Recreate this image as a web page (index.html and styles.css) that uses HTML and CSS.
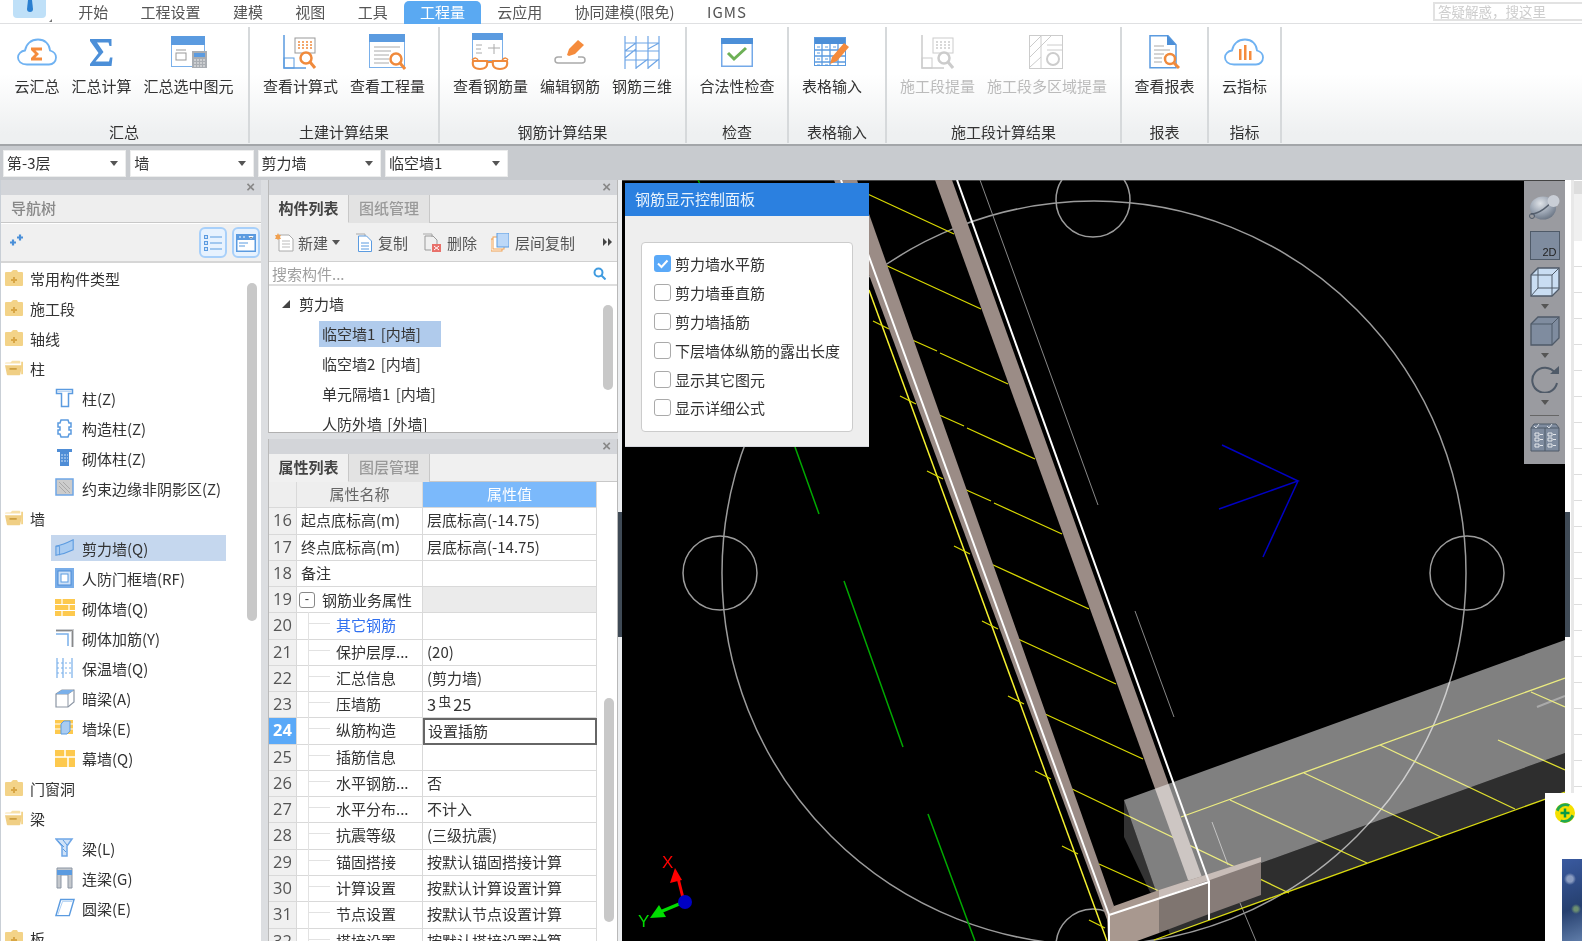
FILE: index.html
```html
<!DOCTYPE html>
<html lang="zh-CN">
<head>
<meta charset="utf-8">
<title>工程量</title>
<link rel="stylesheet" href="styles.css">
</head>
<body>
<svg class="defs" width="0" height="0">
  <defs><radialGradient id="orb" cx=".4" cy=".3" r=".8"><stop offset="0" stop-color="#dfe3e8"/><stop offset=".55" stop-color="#98a2b0"/><stop offset="1" stop-color="#5f6a79"/></radialGradient></defs>
  <symbol id="fc" viewBox="0 0 18 16"><path d="M0 3a1 1 0 0 1 1-1h5l2-2h4l1 2h4a1 1 0 0 1 1 1v12a1 1 0 0 1-1 1H1a1 1 0 0 1-1-1z" fill="#f3d388"/><path d="M6 9h6v2H6z" fill="#d8a645"/><path d="M8 7h2v6H8z" fill="#d8a645"/></symbol>
  <symbol id="fo" viewBox="0 0 20 16"><path d="M0 3a1 1 0 0 1 1-1h5l2-2h8a1 1 0 0 1 1 1v2H6z" fill="#f7e0a8"/><path d="M0 5h19l-2 10a1 1 0 0 1-1 1H3a1 1 0 0 1-1-1z" fill="#f0cf85"/><path d="M5 8h8v2H5z" fill="#cfa040"/><path d="M18 1h2v14h-2z" fill="#f3d388"/></symbol>
  <symbol id="tri" viewBox="0 0 8 5"><path d="M0 0h8L4 5z" fill="#555"/></symbol>
</svg>
<div class="app">
  <header class="menu">
    <div class="logo">
      <svg width="62" height="24" viewBox="0 0 62 24"><path d="M13 0h33v14a4 4 0 0 1-4 4H17a4 4 0 0 1-4-4z" fill="#bfe0f8"/><path d="M28 0h4l1 9a3 3 0 0 1-6 0z" fill="#2a7fd0"/><path d="M49 22l3-3v3z" fill="#777"/></svg>
    </div>
    <span class="tab">开始</span><span class="tab">工程设置</span><span class="tab">建模</span><span class="tab">视图</span><span class="tab">工具</span><span class="tab active">工程量</span><span class="tab">云应用</span><span class="tab">协同建模(限免)</span><span class="tab latin">IGMS</span>
    <div class="ask">答疑解惑，搜这里</div>
  </header>

  <section class="ribbon">
    <div class="group g1">
      <div class="items">
        <div class="item"><div class="ico"><svg width="40" height="28" viewBox="0 0 40 28"><path d="M10 26.500C4 26.500 1 23 1 19.500 1 16 4 13 8 12.500 9 6 14 1.500 21 1.500 28 1.500 32.500 6 33 12.500 36.500 13.500 39 16 39 19.500 39 23.500 36 26.500 32 26.500Z" fill="#fff" stroke="#6fb2f2" stroke-width="1.800"/><path d="M14 9.500h11v3h-6.500l3.500 3.500-3.500 3.500H25v3H14v-2.500l4-4-4-4z" fill="#f58b3c"/></svg></div><span>云汇总</span></div>
        <div class="item"><div class="ico"><svg width="24" height="27" viewBox="0 0 24 27"><path d="M1 0H22.500V7H20.500L19.500 3.500H8L14.500 13 6.500 22.500H20L21 18.500H23.500L22.500 27H1V25L9.500 14 1 2Z" fill="#4c8fd8"/></svg></div><span>汇总计算</span></div>
        <div class="item"><div class="ico"><svg width="36" height="32" viewBox="0 0 36 32"><rect x=".5" y=".5" width="33" height="30" fill="#fff" stroke="#7ab0ea"/><rect width="34" height="9" fill="#5b9be0"/><rect x="5" y="17" width="10" height="7" fill="none" stroke="#999"/><path d="M5 14h10" stroke="#999"/><rect x="21" y="15" width="15" height="17" fill="#a9adb2"/><rect x="23" y="17" width="11" height="4" fill="#5b9be0"/><path d="M23 24h11M23 27h11M23 30h11" stroke="#eee" stroke-dasharray="2 1"/></svg></div><span>汇总选中图元</span></div>
      </div>
      <div class="gname">汇总</div>
    </div>
    <div class="group g2">
      <div class="items">
        <div class="item"><div class="ico"><svg width="34" height="34" viewBox="0 0 34 34"><path d="M1 0v33h22" fill="none" stroke="#5b9be0" stroke-width="1.500"/><rect x="1" y="23" width="10" height="10" fill="none" stroke="#5b9be0"/><rect x="12" y="3" width="20" height="15" fill="#fff" stroke="#999"/><path d="M15 7h14M15 10h14M15 13h14" stroke="#f08a3c" stroke-width="1.500" stroke-dasharray="2 2"/><circle cx="23" cy="23" r="5.500" fill="#fff" stroke="#f08a3c" stroke-width="2.500"/><path d="M27 27l5 6" stroke="#f08a3c" stroke-width="3"/></svg></div><span>查看计算式</span></div>
        <div class="item"><div class="ico"><svg width="37" height="36" viewBox="0 0 37 36"><rect x=".5" y=".5" width="35" height="33" fill="#fff" stroke="#7ab0ea"/><rect width="36" height="8" fill="#5b9be0"/><path d="M5 13h26M5 17h17M5 21h15M5 25h15M5 29h15" stroke="#aaa"/><circle cx="27" cy="25" r="5.500" fill="#fff" stroke="#f08a3c" stroke-width="2.500"/><path d="M31 29l5 6" stroke="#f08a3c" stroke-width="3"/></svg></div><span>查看工程量</span></div>
      </div>
      <div class="gname">土建计算结果</div>
    </div>
    <div class="group g3">
      <div class="items">
        <div class="item"><div class="ico"><svg width="38" height="38" viewBox="0 0 38 38"><rect x="1.500" y=".5" width="30" height="27" fill="#fff" stroke="#7ab0ea"/><rect x="1" width="31" height="7" fill="#5b9be0"/><path d="M5 12h6M5 16h5M5 20h6M17 15h12M23 11v10" stroke="#aaa"/><path d="M1 27c3-3 5-2 6 0M31 27c3-3 5-2 6 0" fill="none" stroke="#f08a3c" stroke-width="1.500"/><path d="M2 28h14c1 5-1 8-7 8S1 33 2 28zM22 28h14c1 5-1 8-7 8s-8-3-7-8zM16 29h6" fill="#fff" stroke="#f08a3c" stroke-width="2"/></svg></div><span>查看钢筋量</span></div>
        <div class="item"><div class="ico"><svg width="32" height="24" viewBox="0 0 32 24"><path d="M13 15l2-6L24 0l6 5-9 9-6 2z" fill="#f58b3c"/><path d="M24 17h4a3 3 0 0 1 0 6H4a3 3 0 0 1 0-6h4" fill="none" stroke="#aaa" stroke-width="1.500"/></svg></div><span>编辑钢筋</span></div>
        <div class="item"><div class="ico"><svg width="36" height="33" viewBox="0 0 36 33"><g fill="none" stroke="#6fa6e6" stroke-width="1.200"><path d="M1 0v33M12 0v33M24 0v33M35 0v33M1 7h34M1 15h34M1 24h34M1 22l11-9M12 32l12-9M24 13L35 7M24 32l11-9M1 15L12 7"/></g></svg></div><span>钢筋三维</span></div>
      </div>
      <div class="gname">钢筋计算结果</div>
    </div>
    <div class="group g4">
      <div class="items">
        <div class="item"><div class="ico"><svg width="32" height="29" viewBox="0 0 32 29"><rect x=".75" y=".75" width="30.500" height="27.500" fill="#fff" stroke="#74a9e8" stroke-width="1.500"/><rect width="32" height="6" fill="#4c8fd8"/><path d="M7 15l6 6 12-11" fill="none" stroke="#6db056" stroke-width="3"/></svg></div><span>合法性检查</span></div>
      </div>
      <div class="gname">检查</div>
    </div>
    <div class="group g5">
      <div class="items">
        <div class="item"><div class="ico"><svg width="36" height="30" viewBox="0 0 36 30"><rect x=".5" y=".5" width="31" height="28" fill="#fff" stroke="#5b9be0"/><rect x="1" y="1" width="30" height="6" fill="#4c8fd8"/><path d="M1 13h30M1 19h30M1 25h30M8 7v22M16 7v22M24 7v22" stroke="#5b9be0" stroke-width="1.300"/><path d="M3 10h3M11 10h3M19 10h3M3 16h3M11 22h3M3 22h3M3 28h3M11 28h3" stroke="#5b9be0"/><path d="M16 27l2-7L30 6l5 4-12 14z" fill="#f58b3c"/></svg></div><span>表格输入</span></div>
      </div>
      <div class="gname">表格输入</div>
    </div>
    <div class="group g6">
      <div class="items">
        <div class="item off"><div class="ico"><svg width="33" height="34" viewBox="0 0 33 34"><path d="M1 0v33h22" fill="none" stroke="#ccc" stroke-width="1.500"/><rect x="1" y="23" width="10" height="10" fill="none" stroke="#ccc"/><rect x="12" y="3" width="20" height="15" fill="#fff" stroke="#ccc"/><path d="M15 7h14M15 10h14M15 13h14" stroke="#ccc" stroke-width="1.500" stroke-dasharray="2 2"/><circle cx="23" cy="23" r="5.500" fill="#fff" stroke="#ccc" stroke-width="2.500"/><path d="M27 27l5 6" stroke="#ccc" stroke-width="3"/></svg></div><span>施工段提量</span></div>
        <div class="item off"><div class="ico"><svg width="36" height="34" viewBox="0 0 36 34"><rect x=".5" y=".5" width="33" height="33" fill="#fff" stroke="#ccc"/><path d="M1 12L12 1M1 22L22 1M1 32L12 22M12 1v32M18 10h15M18 15h15" stroke="#ccc"/><circle cx="24" cy="24" r="6" fill="#fff" stroke="#ccc" stroke-width="2"/></svg></div><span>施工段多区域提量</span></div>
      </div>
      <div class="gname">施工段计算结果</div>
    </div>
    <div class="group g7">
      <div class="items">
        <div class="item"><div class="ico"><svg width="31" height="34" viewBox="0 0 31 34"><path d="M1 .75h18l8 9v23H1z" fill="#fff" stroke="#5b9be0" stroke-width="1.500"/><path d="M18 0l9 10h-9z" fill="#4c8fd8"/><path d="M5 11h10M5 15h16M5 19h10M5 23h8M5 27h8" stroke="#aaa"/><circle cx="21" cy="24" r="5" fill="#fff" stroke="#f08a3c" stroke-width="2.500"/><path d="M25 28l5 5" stroke="#f08a3c" stroke-width="3"/></svg></div><span>查看报表</span></div>
      </div>
      <div class="gname">报表</div>
    </div>
    <div class="group g8">
      <div class="items">
        <div class="item"><div class="ico"><svg width="40" height="28" viewBox="0 0 40 28"><path d="M10 26.500C4 26.500 1 23 1 19.500 1 16 4 13 8 12.500 9 6 14 1.500 21 1.500 28 1.500 32.500 6 33 12.500 36.500 13.500 39 16 39 19.500 39 23.500 36 26.500 32 26.500Z" fill="#fff" stroke="#6fb2f2" stroke-width="1.800"/><path d="M15 11h2.500v11H15zM20 7h2.500v15H20zM25 13h2.500v9H25z" fill="#f58b3c"/></svg></div><span>云指标</span></div>
      </div>
      <div class="gname">指标</div>
    </div>
  </section>

  <section class="selects">
    <div class="sel"><span>第-3层</span><svg width="8" height="5"><use href="#tri"/></svg></div>
    <div class="sel"><span>墙</span><svg width="8" height="5"><use href="#tri"/></svg></div>
    <div class="sel"><span>剪力墙</span><svg width="8" height="5"><use href="#tri"/></svg></div>
    <div class="sel"><span>临空墙1</span><svg width="8" height="5"><use href="#tri"/></svg></div>
  </section>

  <main class="main">
    <aside class="left">
      <div class="pbar">×</div>
      <div class="navhead">导航树</div>
      <div class="navtools">
        <svg class="plus" width="16" height="14" viewBox="0 0 16 14"><path d="M2 8.500h6M5 5.500v6M9 3.500h6M12 .5v6" stroke="#4a8fd8" stroke-width="2.200" fill="none"/></svg>
        <span class="navbtn"><svg width="18" height="18" viewBox="0 0 18 18"><path d="M6 3h12M6 9h12M6 15h12" stroke="#5b9be0" stroke-width="1.200"/><rect x=".5" y="1.500" width="3" height="3" fill="#cfe2f8" stroke="#5b9be0"/><rect x=".5" y="7.500" width="3" height="3" fill="#cfe2f8" stroke="#5b9be0"/><rect x=".5" y="13.500" width="3" height="3" fill="#cfe2f8" stroke="#5b9be0"/></svg></span>
        <span class="navbtn"><svg width="20" height="18" viewBox="0 0 20 18"><rect x=".75" y=".75" width="18.500" height="16.500" fill="#fff" stroke="#5b9be0" stroke-width="1.500"/><rect x="1" y="1" width="18" height="5" fill="#5b9be0"/><path d="M3 9h9M3 12h6" stroke="#5b9be0"/><path d="M3 3h2M7 3h2M13 2.500h4l-2 2z" stroke="#fff"/></svg></span>
      </div>
      <div class="tree">
        <div class="tnode"><svg class="fold" width="18" height="16"><use href="#fc"/></svg>常用构件类型</div>
        <div class="tnode"><svg class="fold" width="18" height="16"><use href="#fc"/></svg>施工段</div>
        <div class="tnode"><svg class="fold" width="18" height="16"><use href="#fc"/></svg>轴线</div>
        <div class="tnode"><svg class="fold" width="20" height="16"><use href="#fo"/></svg>柱</div>
        <div class="tleaf"><svg width="20" height="20" viewBox="0 0 20 20"><path d="M1.500 1.500h16v4h-4v13h-7v-13h-5z" fill="#fff" stroke="#5b9be0" stroke-width="1.500"/><path d="M2 3.500h15" stroke="#bcd6f3"/></svg><span>柱(Z)</span></div>
        <div class="tleaf"><svg width="20" height="20" viewBox="0 0 20 20"><path d="M6 2h7l1 3h2v4h-2v3h2v4h-2l-1 3H6l-1-3H3v-4h2V9H3V5h2z" fill="#fff" stroke="#5b9be0" stroke-width="1.500"/></svg><span>构造柱(Z)</span></div>
        <div class="tleaf"><svg width="20" height="20" viewBox="0 0 20 20"><path d="M2 1h15v3h-3v14H5V4H2z" fill="#4f8dd6"/><path d="M6 7h7M6 10h7M6 13h7" stroke="#cfe2f8" stroke-dasharray="2 1"/></svg><span>砌体柱(Z)</span></div>
        <div class="tleaf"><svg width="20" height="20" viewBox="0 0 20 20"><rect x="1" y="1" width="17" height="16" fill="#ccc" stroke="#6fa6e6" stroke-width="1.500"/><path d="M4 4l11 11M4 8l7 7M8 4l7 7" stroke="#999" stroke-width=".7"/></svg><span>约束边缘非阴影区(Z)</span></div>
        <div class="tnode"><svg class="fold" width="20" height="16"><use href="#fo"/></svg>墙</div>
        <div class="tleaf sel-leaf"><svg width="22" height="20" viewBox="0 0 22 20"><path d="M1 8C7 7 14 4 20 1v11C14 15 8 17 1 18z" fill="#a9ccf2" stroke="#5b9be0" stroke-width="1.200"/><path d="M1 8h4v10" fill="none" stroke="#5b9be0"/></svg><span>剪力墙(Q)</span></div>
        <div class="tleaf"><svg width="20" height="20" viewBox="0 0 20 20"><rect width="19" height="20" fill="#79ade8"/><rect x="3" y="3" width="13" height="14" fill="#cfe2f8" stroke="#4f8dd6"/><rect x="6" y="6" width="7" height="8" fill="#fff" stroke="#5b9be0"/></svg><span>人防门框墙(RF)</span></div>
        <div class="tleaf"><svg width="20" height="18" viewBox="0 0 20 18"><rect width="20" height="17" fill="#fdc94e"/><path d="M0 5.500h20M0 11.500h20M7 0v5.500M14 5.500v6M7 11.500v6" stroke="#fff" stroke-width="1.200"/></svg><span>砌体墙(Q)</span></div>
        <div class="tleaf"><svg width="20" height="20" viewBox="0 0 20 20"><path d="M1 1h18v18h-3V4H1z" fill="#c9ccd0"/><path d="M1 6h12v12" fill="none" stroke="#7ab0ea" stroke-width="1.500"/><path d="M1 2.500h16.500V19" fill="none" stroke="#888"/></svg><span>砌体加筋(Y)</span></div>
        <div class="tleaf"><svg width="20" height="20" viewBox="0 0 20 20"><path d="M2 0v20M8 0v20M17 0v20" stroke="#7ab0ea" stroke-width="1.200"/><path d="M2 5h15M2 10h15M2 15h15" stroke="#7ab0ea" stroke-dasharray="2 2"/></svg><span>保温墙(Q)</span></div>
        <div class="tleaf"><svg width="20" height="20" viewBox="0 0 20 20"><path d="M1 6l6-4h12v12l-6 5H1z" fill="#fff" stroke="#8b95a3" stroke-width="1.200"/><path d="M1 6h12v13M13 6l6-4" fill="none" stroke="#8b95a3"/><path d="M1 6l6-4h12l-6 4z" fill="#7ab0ea"/></svg><span>暗梁(A)</span></div>
        <div class="tleaf"><svg width="20" height="18" viewBox="0 0 20 18"><rect y="1" width="18" height="14" fill="#fdc94e"/><path d="M0 5h18M0 10h18" stroke="#fff"/><path d="M6 5l3-3h6v10l-3 3H6z" fill="#a9ccf2" stroke="#5b9be0"/></svg><span>墙垛(E)</span></div>
        <div class="tleaf"><svg width="20" height="17" viewBox="0 0 20 17"><rect width="20" height="17" fill="#fdc94e"/><path d="M0 7h20M10 0v7M13 7v10" stroke="#fff" stroke-width="1.500"/></svg><span>幕墙(Q)</span></div>
        <div class="tnode"><svg class="fold" width="18" height="16"><use href="#fc"/></svg>门窗洞</div>
        <div class="tnode"><svg class="fold" width="20" height="16"><use href="#fo"/></svg>梁</div>
        <div class="tleaf"><svg width="20" height="20" viewBox="0 0 20 20"><path d="M1 1h16l-5 7v10H7V8z" fill="#cfe2f8" stroke="#6fa6e6" stroke-width="1.500"/><path d="M3 3l6 6M8 2l4 5M8 11l3 3" stroke="#5b9be0"/></svg><span>梁(L)</span></div>
        <div class="tleaf"><svg width="20" height="22" viewBox="0 0 20 22"><path d="M2 21V1h15v20h-4V8H6v13z" fill="#c4c8cd" stroke="#8b95a3"/><rect x="2" y="3" width="15" height="5" fill="#5b9be0"/></svg><span>连梁(G)</span></div>
        <div class="tleaf"><svg width="21" height="20" viewBox="0 0 21 20"><path d="M6 1h14l-5 17H1z" fill="#fff" stroke="#5b9be0" stroke-width="1.500"/><path d="M3 17L8 3h10" fill="none" stroke="#a9ccf2"/></svg><span>圆梁(E)</span></div>
        <div class="tnode"><svg class="fold" width="18" height="16"><use href="#fc"/></svg>板</div>
        <div class="thumb nav-thumb"></div>
      </div>
    </aside>

    <div class="mid">
      <div class="panel list-panel">
        <div class="pbar">×</div>
        <div class="ptabs"><span class="ptab on">构件列表</span><span class="ptab">图纸管理</span></div>
        <div class="ltools">
          <span class="lt lt-new"><svg width="20" height="19" viewBox="0 0 20 19"><path d="M4 2h10l4 4v12H4z" fill="#fff" stroke="#aaa"/><path d="M7 8h8M7 11h8M7 14h8" stroke="#bbb"/><path d="M3 0l1 2 2 0-1 2 1 2-2 0-1 1-1-1-2 0 1-2-1-2 2 0z" fill="#f0a050"/></svg>新建<svg class="caret" width="8" height="5"><use href="#tri"/></svg></span>
          <span class="lt"><svg width="16" height="19" viewBox="0 0 16 19"><path d="M0 1h9v3" fill="none" stroke="#aaa"/><path d="M2.500 3h8l5 5v10.500h-13z" fill="#fff" stroke="#5b9be0"/><path d="M5 10h8M5 13h8M5 16h8" stroke="#5b9be0"/></svg>复制</span>
          <span class="lt"><svg width="19" height="19" viewBox="0 0 19 19"><path d="M1 1h9v3" fill="none" stroke="#aaa"/><path d="M3 3h8l4 4v5M3 3v14h6" fill="none" stroke="#999"/><rect x="10" y="11" width="9" height="8" fill="#e8706a"/><path d="M12 13l5 4M17 13l-5 4" stroke="#fff"/></svg>删除</span>
          <span class="lt"><svg width="18" height="19" viewBox="0 0 18 19"><rect x="0" y="6" width="11" height="12" fill="#fff" stroke="#f0a050"/><rect x="2" y="4" width="11" height="12" fill="#fff" stroke="#f0a050"/><rect x="6" y="0" width="12" height="14" fill="#bcd8f8" stroke="#5b9be0"/></svg>层间复制</span>
          <svg class="more" width="9" height="8" viewBox="0 0 9 8"><path d="M0 0l4 4-4 4zM5 0l4 4-4 4z" fill="#444"/></svg>
        </div>
        <div class="search">搜索构件...<svg width="13" height="13" viewBox="0 0 13 13"><circle cx="5.500" cy="5.500" r="4" fill="none" stroke="#3f9be0" stroke-width="2"/><path d="M8.500 8.500l4 4" stroke="#3f9be0" stroke-width="2"/></svg></div>
        <div class="clist">
          <div class="chead"><svg width="8" height="8" viewBox="0 0 8 8"><path d="M8 0v8H0z" fill="#444"/></svg>剪力墙</div>
          <div class="citem on">临空墙1 [内墙]</div>
          <div class="citem">临空墙2 [内墙]</div>
          <div class="citem">单元隔墙1 [内墙]</div>
          <div class="citem">人防外墙 [外墙]</div>
          <div class="thumb list-thumb"></div>
        </div>
      </div>
      <div class="panel prop-panel">
        <div class="pbar">×</div>
        <div class="ptabs"><span class="ptab on">属性列表</span><span class="ptab">图层管理</span></div>
        <div class="props">
          <div class="grid">
            <div class="c n hd"></div><div class="c hd ctr">属性名称</div><div class="c hdv ctr">属性值</div>
            <div class="c n">16</div><div class="c">起点底标高(m)</div><div class="c">层底标高(-14.75)</div>
            <div class="c n">17</div><div class="c">终点底标高(m)</div><div class="c">层底标高(-14.75)</div>
            <div class="c n">18</div><div class="c">备注</div><div class="c"></div>
            <div class="c n">19</div><div class="c gr"><i class="minus">-</i>钢筋业务属性</div><div class="c grv"></div>
            <div class="c n">20</div><div class="c sub link">其它钢筋</div><div class="c"></div>
            <div class="c n">21</div><div class="c sub">保护层厚...</div><div class="c">(20)</div>
            <div class="c n">22</div><div class="c sub">汇总信息</div><div class="c">(剪力墙)</div>
            <div class="c n">23</div><div class="c sub">压墙筋</div><div class="c rebar">3<sup class="bar">虫</sup>25</div>
            <div class="c n act">24</div><div class="c sub">纵筋构造</div><div class="c edit">设置插筋</div>
            <div class="c n">25</div><div class="c sub">插筋信息</div><div class="c"></div>
            <div class="c n">26</div><div class="c sub">水平钢筋...</div><div class="c">否</div>
            <div class="c n">27</div><div class="c sub">水平分布...</div><div class="c">不计入</div>
            <div class="c n">28</div><div class="c sub">抗震等级</div><div class="c">(三级抗震)</div>
            <div class="c n">29</div><div class="c sub">锚固搭接</div><div class="c">按默认锚固搭接计算</div>
            <div class="c n">30</div><div class="c sub">计算设置</div><div class="c">按默认计算设置计算</div>
            <div class="c n">31</div><div class="c sub">节点设置</div><div class="c">按默认节点设置计算</div>
            <div class="c n">32</div><div class="c sub">搭接设置</div><div class="c">按默认搭接设置计算</div>
          </div>
          <div class="thumb prop-thumb"></div>
        </div>
      </div>
    </div>

    <div class="split"><i></i></div>

    <div class="view">
      <svg class="scene" width="943" height="761" viewBox="622 180 943 761">
        <rect x="622" y="180" width="943" height="761" fill="#000"/>
        <path d="M622 180.500H1565" stroke="#444"/>
        <g fill="none" stroke="#9c9c9c" stroke-width="1.500">
          <circle cx="1094" cy="573" r="372"/>
          <circle cx="1093" cy="200" r="37"/>
          <circle cx="720" cy="573" r="37"/>
          <circle cx="1467" cy="573" r="37"/>
          <circle cx="1093" cy="946" r="37"/>
        </g>
        <g stroke="#888" fill="none">
          <path d="M980 180L1098 505M1135 611L1174 717M1212 822L1228 865M1240 903L1256 941"/>
        </g>
        <path d="M1537 707L1565 696" stroke="#555" stroke-width="2"/>
        <g stroke="#00a800" stroke-width="1.500" fill="none">
          <path d="M698 180L701 186M795 447L819 514M844 581L903 747M928 814L975 941"/>
        </g>
        <g stroke="#0000c4" stroke-width="1.500" fill="none">
          <path d="M1222 445L1298 481L1219 509M1298 481L1263 557"/>
        </g>
        <path d="M869 290L1107 941" stroke="#f4f030" stroke-width="1.500" fill="none"/>
        <g stroke="#d8d800" stroke-width="1.300" fill="none">
          <path d="M846 184L954 234M883 264L981 309"/>
          <path d="M873 321L889 329M910 339L937 351M940 353L1008 384"/>
          <path d="M900 396L916 404M937 414L964 426M967 428L1035 459"/>
          <path d="M927 471L943 479M964 489L991 501M994 503L1062 534"/>
          <path d="M954 546L970 554M991 564L1089 609"/>
          <path d="M982 621L998 629M1018 639L1116 684"/>
          <path d="M1008 696L1024 704M1045 714L1143 759"/>
          <path d="M1035 771L1051 779M1072 789L1289 893"/>
          <path d="M1062 846L1078 854M1099 864L1159 891"/>
          <path d="M1089 920L1105 928"/>
          <path d="M1181 817L1565 678M1230 800L1367 863M1304 773L1441 837M1380 745L1515 809M1498 740L1565 770M1531 692L1565 707"/>
          <path d="M1154 940L1565 792"/>
        </g>
        <path d="M935 180L952 180L1203 880L1188 880Z" fill="#9b8c86"/>
        <path d="M834 180L857 180L1114 906L1109 925Z" fill="#9b8c86"/>
        <path d="M1124 800L1565 640V753L1159 900Z" fill="#fff" fill-opacity=".5"/>
        <path d="M1124 800V837L1150 892L1159 900Z" fill="#fff" fill-opacity=".2"/>
        <path d="M1159 900L1565 753V792L1209 920L1170 935Z" fill="#fff" fill-opacity=".18"/>
        <path d="M1114 906L1159 890V933L1137 941H1108L1107 915Z" fill="#a8988f"/>
        <path d="M1159 890L1209 874V914L1159 933Z" fill="#7f7570"/>
        <path d="M1209 874L1261 857V895L1209 914Z" fill="#877c78"/>
        <path d="M1159 890L1261 857V862L1159 898Z" fill="#c8bdb8"/>
        <g stroke="#fff" fill="none">
          <path d="M841 180L1109 915" stroke-width="2"/>
          <path d="M957 180L1209 882" stroke-width="2"/>
          <path d="M1109 941V915L1209 882V920" stroke-width="2"/>
        </g>
        <path d="M684 902L678 878" stroke="#f00" stroke-width="3"/>
        <path d="M675 868L670 883L682 880Z" fill="#f00"/>
        <path d="M684 902L660 912" stroke="#0d0" stroke-width="3.500"/>
        <path d="M650 918L659 905L666 917Z" fill="#0d0"/>
        <ellipse cx="685" cy="902" rx="7" ry="7" fill="#0000c4"/>
        <text x="662" y="868" class="ax-x">X</text>
        <text x="638" y="927" class="ax-y">Y</text>
      </svg>

      <div class="dlg">
        <div class="dlg-h">钢筋显示控制面板</div>
        <div class="dlg-b">
          <div class="dlg-box">
            <div class="chk"><span class="cb on"><svg width="17" height="17" viewBox="0 0 17 17"><path d="M4 8.500l3.500 3.500 6-6.500" fill="none" stroke="#fff" stroke-width="2"/></svg></span>剪力墙水平筋</div>
            <div class="chk"><span class="cb"></span>剪力墙垂直筋</div>
            <div class="chk"><span class="cb"></span>剪力墙插筋</div>
            <div class="chk"><span class="cb"></span>下层墙体纵筋的露出长度</div>
            <div class="chk"><span class="cb"></span>显示其它图元</div>
            <div class="chk"><span class="cb"></span>显示详细公式</div>
          </div>
        </div>
      </div>

      <div class="vtools">
        <svg width="32" height="26" viewBox="0 0 32 26"><ellipse cx="14" cy="14" rx="13" ry="11.500" fill="url(#orb)"/><path d="M2 20C10 20 20 12 25 5" stroke="#56606e" stroke-width="1.500" fill="none"/><circle cx="24.500" cy="7" r="6" fill="#c9ced6"/><circle cx="3" cy="22" r="2.500" fill="none" stroke="#4f5a68"/></svg>
        <div class="v2d">2D</div>
        <svg width="30" height="30" viewBox="0 0 30 30"><path d="M1 8l7-7h21v21l-7 7H1z" fill="#c9ddf2" stroke="#4f5a68" stroke-width="1.300"/><path d="M1 8h21v21M22 8l7-7M8 1v20H29M8 21l-7 8" fill="none" stroke="#4f5a68"/></svg>
        <svg class="vc" width="8" height="5"><use href="#tri"/></svg>
        <svg width="30" height="30" viewBox="0 0 30 30"><path d="M1 8l7-7h21v21l-7 7H1z" fill="#7f8c9f" stroke="#4f5a68" stroke-width="1.300"/><path d="M1 8h21v21M22 8l7-7" fill="none" stroke="#4f5a68"/></svg>
        <svg class="vc" width="8" height="5"><use href="#tri"/></svg>
        <svg width="30" height="28" viewBox="0 0 30 28"><path d="M25 8A12.500 12.500 0 1 0 27 18" fill="none" stroke="#4f5a68" stroke-width="2"/><path d="M20 9h9V1z" fill="#4f5a68"/></svg>
        <svg class="vc" width="8" height="5"><use href="#tri"/></svg>
        <div class="vline"></div>
        <svg width="30" height="29" viewBox="0 0 30 29"><path d="M1 5l3-4h22l3 4v23H1z" fill="#7f8c9f" stroke="#4f5a68"/><path d="M1 5h28M15 5v23" stroke="#4f5a68"/><path d="M4 3l2 2 3-4M17 3l2 2 3-4" stroke="#d8dde4" fill="none"/><path d="M5 10h4v3H5zM5 15h4v3H5zM5 21h4v3H5zM18 10h4v3h-4zM18 15h4v3h-4zM18 21h4v3h-4z" fill="none" stroke="#e4e7eb"/><path d="M10 11.500h3M10 16.500h3M10 22.500h3M23 11.500h3M23 16.500h3M23 22.500h3" stroke="#e4e7eb"/></svg>
      </div>
    </div>

    <aside class="right">
      <div class="rsplit"><i></i></div>
      <div class="rpanel">
        <div class="rbar"></div>
        <div class="rtab"></div>
        <div class="rlines"></div>
      </div>
    </aside>

    <div class="popup">
      <svg width="20" height="20" viewBox="0 0 20 20"><circle cx="10" cy="10" r="10" fill="#f6e000"/><path d="M1 7a10 10 0 0 1 14-5.500l-1.500 2a7.500 7.500 0 0 0-10 5zM19 13a10 10 0 0 1-14 5.500l1.500-2a7.500 7.500 0 0 0 10-5z" fill="#20a850"/><path d="M10 5.500v9M5.500 10h9" stroke="#0a9a45" stroke-width="2.500"/></svg>
      <div class="pic"></div>
    </div>
  </main>
</div>
</body>
</html>
```

FILE: styles.css
```css
* { box-sizing: border-box; }
html, body { margin: 0; padding: 0; }
body { width: 1582px; height: 941px; overflow: hidden; background: #fff; font-family: "Noto Sans CJK SC", "Open Sans", sans-serif; font-size: 15px; color: #333; }
.defs { position: absolute; }
.app { width: 1582px; height: 941px; display: flex; flex-direction: column; filter: blur(.35px); }

/* menu */
.menu { height: 24px; flex: none; display: flex; align-items: stretch; border-bottom: 1px solid #dfe0e2; background: #fff; }
.logo { width: 62px; flex: none; height: 24px; }
.logo svg { display: block; }
.tab { padding: 0 16.200px; line-height: 23px; color: #555; white-space: nowrap; }
.tab.active { margin-top: 1px; padding: 0 16px; line-height: 22px; background: #5aa9f2; color: #fff; border-radius: 5px 5px 0 0; height: 23px; }
.tab.latin { letter-spacing: 1px; }
.ask { margin-left: auto; margin-top: 2px; width: 149px; height: 19px; border: 2px solid #e2e2e2; border-right: 0; line-height: 15px; padding-left: 3px; color: #cdcdcd; font-size: 13.500px; white-space: nowrap; overflow: hidden; }

/* ribbon */
.ribbon { height: 122px; flex: none; display: flex; background: linear-gradient(#fff 0, #fff 50px, #eef0f1 110px); border-bottom: 2px solid #a3a6a9; padding-top: 3px; }
.group { display: flex; flex-direction: column; align-items: center; border-right: 2px solid #d6d9db; height: 116px; }
.g1 { width: 250px; } .g2 { width: 190px; } .g3 { width: 247px; } .g4 { width: 102px; }
.g5 { width: 98px; } .g6 { width: 235px; } .g7 { width: 87px; } .g8 { width: 73px; }
.g5 .items { margin-right: 10px; }
.items { display: flex; gap: 12px; height: 95px; justify-content: center; }
.item { display: flex; flex-direction: column; align-items: center; white-space: nowrap; }
.ico { height: 44px; margin-top: 3px; display: flex; align-items: center; justify-content: center; }
.ico svg { display: block; }
.item span { line-height: 20px; margin-top: 2px; color: #333; }
.item.off span { color: #bbb; }
.gname { line-height: 20px; color: #333; }

/* select row */
.selects { height: 34px; flex: none; background: #c8cbcf; padding: 4px 0 3px 3px; display: flex; gap: 4px; }
.sel { width: 123.300px; height: 27px; background: #fff; padding: 0 7px 0 3px; display: flex; align-items: center; justify-content: space-between; border: 1px solid #eceded; color: #333; }
.sel span { line-height: 20px; margin-top: -2px; }

/* main */
.main { flex: 1; min-height: 0; position: relative; display: flex; background: #dcdee1; }
.pbar { height: 15px; background: #d3d5d9; color: #888; font: bold 15px/14px "Liberation Sans", sans-serif; text-align: right; padding-right: 6px; flex: none; }

.left { width: 261px; flex: none; display: flex; flex-direction: column; border-left: 1px solid #c9cfd6; background: #fff; }
.navhead { height: 28px; flex: none; background: #eee; border-bottom: 1px solid #c8c8c8; padding-left: 10px; line-height: 26px; color: #888; font-weight: 500; }
.navtools { height: 39px; flex: none; background: #f0f0f0; border-bottom: 2px solid #d6d6d6; margin-top: 1px; display: flex; align-items: center; gap: 5px; padding-right: 1px; }
.plus { margin-left: 7px; margin-right: auto; margin-top: -3px; }
.navbtn { width: 28px; height: 31px; border: 2px solid #a8d0fa; border-radius: 6px; background: #e7f2fe; display: flex; align-items: center; justify-content: center; }
.tree { flex: 1; position: relative; padding-top: 0; overflow: hidden; }
.tnode, .tleaf { height: 30px; display: flex; align-items: center; white-space: nowrap; }
.tnode { padding-left: 4px; }
.fold { width: 18px; margin-right: 7px; flex: none; }
.tleaf { margin-left: 50px; width: 175px; padding-left: 4px; }
.tleaf svg { width: 20px; flex: none; margin-right: 7px; }
.tleaf.sel-leaf { height: 26px; margin-top: 2px; margin-bottom: 2px; background: #c5d7ee; }
.thumb { position: absolute; background: #c8c8c8; border-radius: 5px; }
.nav-thumb { left: 246px; top: 20px; width: 10px; height: 338px; }

.mid { width: 350px; flex: none; margin-left: 7px; display: flex; flex-direction: column; gap: 6px; }
.panel { display: flex; flex-direction: column; border-right: 1px solid #b9b9b9; border-left: 1px solid #b9b9b9; background: #f0f0f0; }
.list-panel { height: 253px; flex: none; border-bottom: 1px solid #b0b0b0; }
.prop-panel { flex: 1; min-height: 0; }
.ptabs { height: 28px; flex: none; display: flex; border-bottom: 1px solid #c8c8c8; }
.ptab { width: 81px; height: 28px; line-height: 26px; text-align: center; background: #e3e3e3; color: #999; border-right: 1px solid #c8c8c8; font-weight: 500; }
.ptab.on { width: 80px; background: #f0f0f0; color: #444; border-bottom: 1px solid #f0f0f0; font-weight: 700; }
.ltools { height: 39px; flex: none; display: flex; align-items: center; padding-left: 6px; border-bottom: 1px solid #d0d0d0; position: relative; color: #555; }
.lt { display: flex; align-items: center; gap: 6px; white-space: nowrap; margin-right: 14px; }
.lt-new { gap: 3px; margin-right: 16px; }
.lt-new .caret { margin-left: 1px; }
.more { margin-left: auto; margin-right: 5px; }
.search { height: 24px; flex: none; background: #fff; display: flex; align-items: center; justify-content: space-between; padding: 0 11px 0 3px; color: #a0a0a0; border-bottom: 2px solid #dedede; }
.clist { flex: 1; min-height: 0; position: relative; background: #fff; overflow: hidden; }
.chead { height: 30px; margin-top: 2.500px; display: flex; align-items: center; gap: 9px; padding-left: 13px; }
.citem { height: 30px; margin-left: 50px; padding-left: 3px; display: flex; align-items: center; white-space: pre; word-spacing: 2px; }
.citem.on { width: 122px; height: 26px; margin: 2px 0 2px 50px; background: #b0cbec; }
.list-thumb { left: 334px; top: 19px; width: 10px; height: 85px; }

.props { flex: 1; min-height: 0; position: relative; overflow: hidden; background: #fff; }
.grid { display: grid; grid-template-columns: 28px 126px 174px; grid-auto-rows: 26.270px; font-size: 15px; }
.c { border-right: 1px solid #d9d9d9; border-bottom: 1px solid #d9d9d9; padding-left: 4px; line-height: 24px; white-space: nowrap; position: relative; color: #333; }
.n { background: #f0f0f0; padding: 0; text-align: center; color: #555; font-family: "Open Sans", sans-serif; font-size: 16.500px; }
.hd { background: #eee; color: #666; }
.hdv { background: #7bb9fb; color: #fff; }
.ctr { text-align: center; padding: 0; }
.gr { display: flex; align-items: center; gap: 7px; padding-left: 2px; }
.grv { background: #ebebeb; }
.minus { width: 16px; height: 16px; border: 1px solid #888; border-radius: 3px; font-style: normal; font: 13px/12px "Liberation Sans", sans-serif; text-align: center; flex: none; }
.sub { padding-left: 39px; }
.sub::before { content: ""; position: absolute; left: 11px; top: -1px; bottom: -1px; width: 21px; border-left: 1px solid #e2e2e2; background: linear-gradient(#e2e2e2, #e2e2e2) no-repeat 0 11px / 100% 1px; }
.link { color: #2f6ff0; }
.rebar { font-size: 16.500px; }
.bar { font-size: 13px; line-height: 0; vertical-align: 5px; padding: 0 2px; }
.act { background: #5aa9f8; color: #fff; font-weight: 700; }
.edit { border: 2px solid #666; line-height: 22px; padding-left: 3px; }
.prop-thumb { left: 335px; top: 216px; width: 10px; height: 224px; }

.split { width: 4px; flex: none; background: #eceef0; }
.split i, .rsplit i { display: block; margin-top: 332px; height: 125px; background: #3f4a56; }

.view { width: 943px; flex: none; position: relative; overflow: hidden; background: #000; }
.scene { display: block; }
.ax-x { font: 17px "Liberation Sans", sans-serif; fill: #f00; }
.ax-y { font: 17px "Liberation Sans", sans-serif; fill: #0d0; }

.dlg { position: absolute; left: 3px; top: 3px; width: 244px; height: 264px; background: #eee; display: flex; flex-direction: column; border-bottom: 1px solid #d6d8de; }
.dlg-h { height: 33px; background: #2b80e0; color: #e8f2fc; line-height: 32px; padding-left: 10px; flex: none; }
.dlg-b { padding: 26px 16px 0; }
.dlg-box { height: 190px; width: 212px; background: #fff; border: 1px solid #ccc; border-radius: 4px; padding-top: 6.500px; }
.chk { height: 28.800px; display: flex; align-items: center; padding-left: 12px; white-space: nowrap; gap: 4px; }
.cb { width: 17px; height: 17px; flex: none; border: 1.500px solid #aaa; border-radius: 3px; background: #fff; }
.cb.on { background: #5aa9f8; border: 0; }
.cb svg { display: block; }

.vtools { position: absolute; right: 0; top: 1px; width: 41px; height: 283px; background: #9a9ba0; display: flex; flex-direction: column; align-items: center; padding-top: 13px; }
.vtools svg { flex: none; display: block; }
.v2d { width: 30px; height: 29px; margin-top: 11px; margin-bottom: 7px; background: #7f8c9f; border: 1px solid #4f5a68; color: #222; font: 11px/11px "Liberation Sans", sans-serif; text-align: right; padding: 15px 2px 0 0; }
.vc { margin: 7px 0; }
.vline { width: 29px; height: 1px; background: #666; margin: 3px 0 7px; }

.right { flex: 1; min-width: 0; display: flex; background: #fff; }
.rsplit { width: 6px; flex: none; background: #fff; }
.rsplit i { margin-right: 1px; }
.rpanel { flex: 1; min-width: 0; display: flex; flex-direction: column; border-left: 3px solid #e8e8e8; }
.rbar { height: 13px; background: #ddd; margin-top: 1px; }
.rtab { height: 47px; background: #f0f0f0; }
.rlines { flex: 1; background: repeating-linear-gradient(#fff 0, #fff 25px, #ddd 25px, #ddd 26px); }

.popup { position: absolute; right: 0; bottom: 0; width: 37px; height: 148px; background: #fff; padding: 10px 0 0 10px; }
.popup svg { display: block; }
.pic { position: absolute; left: 17px; top: 66px; right: 0; bottom: 0; background: radial-gradient(circle at 8px 20px, #8a9cc0 0 3px, transparent 6px), radial-gradient(circle at 14px 50px, #6c8f70 0 2px, transparent 5px), linear-gradient(160deg, #3a5aa0, #26406f 60%, #5f7ca8); }
```
